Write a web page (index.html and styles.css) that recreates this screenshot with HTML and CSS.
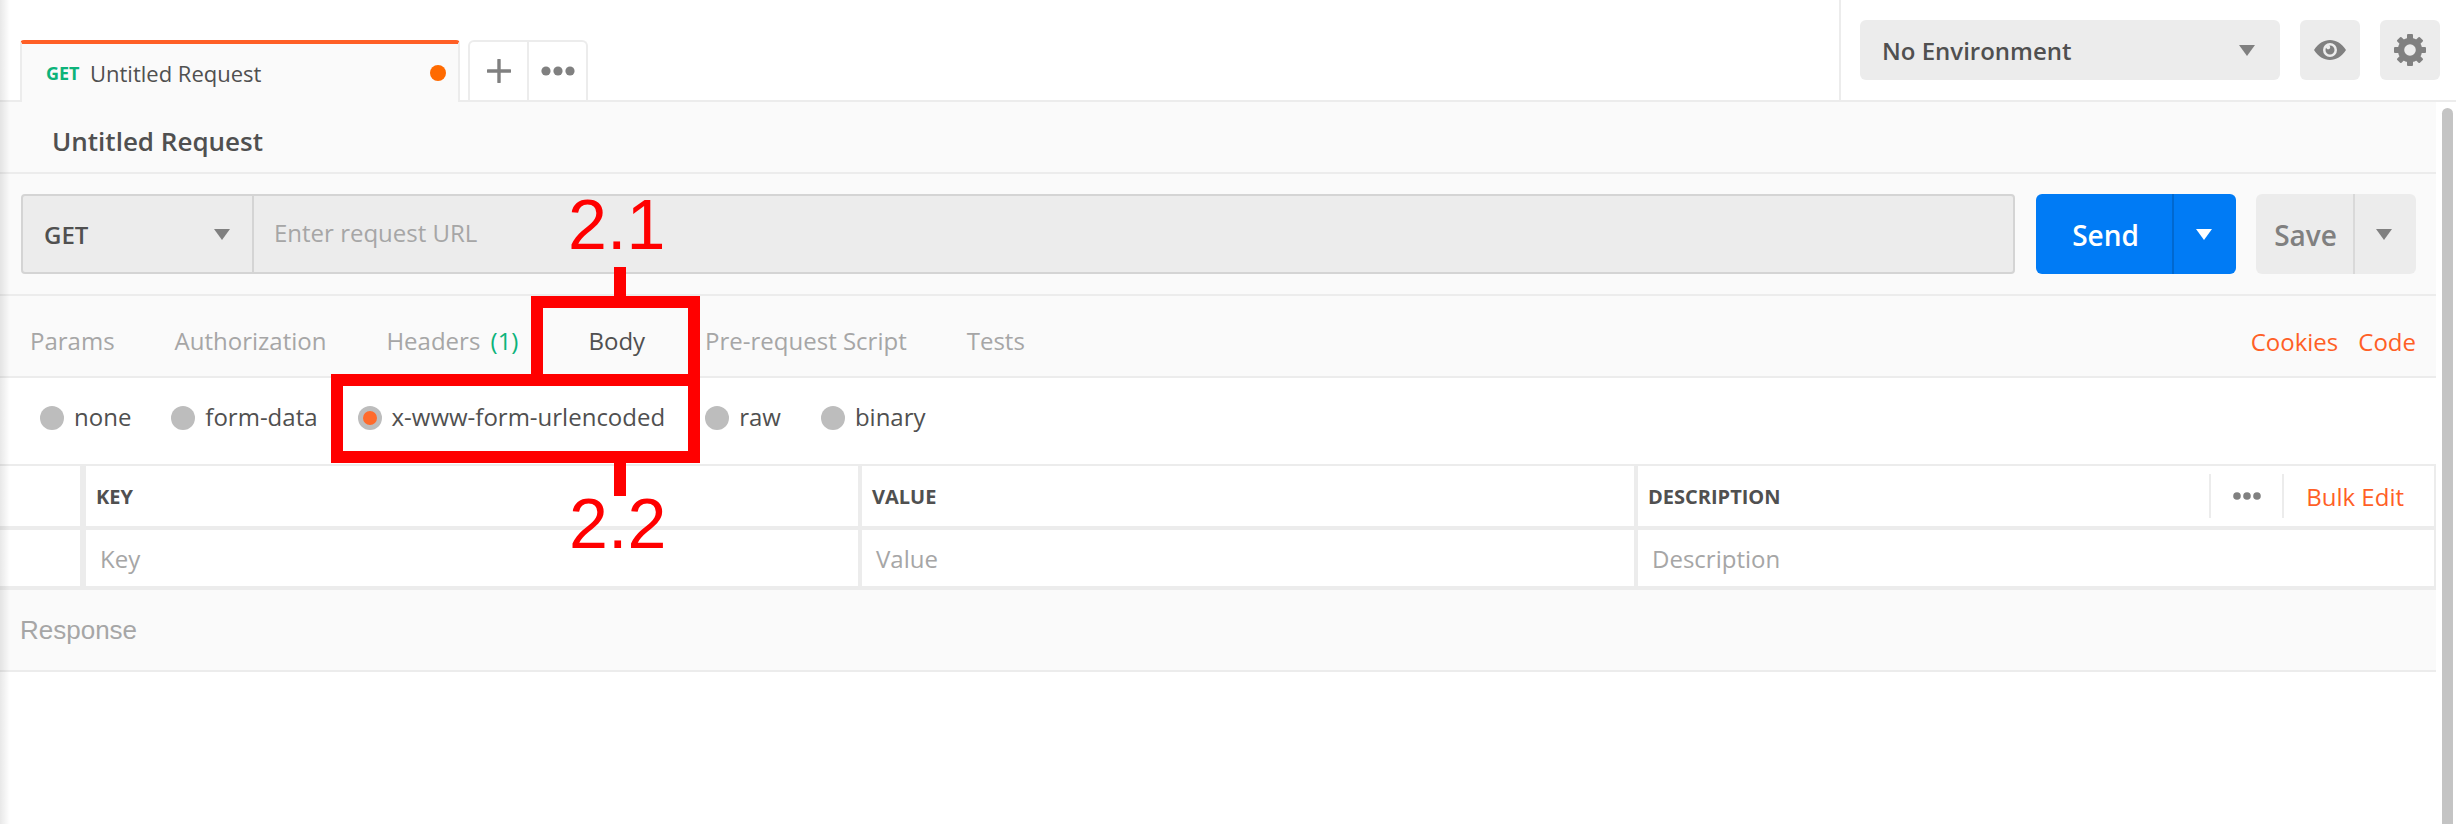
FILE: index.html
```html
<!DOCTYPE html>
<html lang="en">
<head>
    <meta charset="UTF-8">
    <title>Untitled Request</title>
    <link rel="stylesheet" href="styles.css">
</head>
<body>
<div class="app">
    <div class="edge-shade"></div>

    <header class="topbar">
        <div class="tabstrip">
            <div class="req-tab">
                <span class="req-tab-method">GET</span>
                <span class="req-tab-name">Untitled Request</span>
                <span class="req-tab-dot"></span>
            </div>
            <div class="tab-actions">
                <div class="tab-action">
                    <svg width="24" height="24" viewBox="0 0 24 24"><path d="M12 1v22M1 12h22" stroke="#808080" stroke-width="3.4" stroke-linecap="round" fill="none"/></svg>
                </div>
                <div class="tab-action">
                    <svg width="34" height="10" viewBox="0 0 34 10"><circle cx="5" cy="5" r="4.6" fill="#808080"/><circle cx="17" cy="5" r="4.6" fill="#808080"/><circle cx="29" cy="5" r="4.6" fill="#808080"/></svg>
                </div>
            </div>
        </div>
        <div class="env">
            <div class="env-select">
                <span>No Environment</span>
                <i class="caret"></i>
            </div>
            <div class="env-btn">
                <svg width="32" height="20" viewBox="0 0 32 20"><path fill="#808080" fill-rule="evenodd" d="M0 10C4 3.500 10 0 16 0s12 3.500 16 10c-4 6.500-10 10-16 10S4 16.500 0 10zm16-7a7 7 0 1 0 0 14 7 7 0 0 0 0-14z"/><path fill="#808080" fill-rule="evenodd" d="M16 5.500a4.500 4.500 0 1 1-4.500 4.500c0-.8.2-1.500.6-2.200.3.900 1.100 1.500 2 1.500 1.200 0 2.100-.9 2.100-2.100 0-.8-.4-1.300-.9-1.700z"/></svg>
            </div>
            <div class="env-btn">
                <svg width="32" height="32" viewBox="-16 -16 32 32">
                    <circle r="9" fill="none" stroke="#808080" stroke-width="6.400"/>
                    <g fill="#808080">
                        <rect x="-3" y="-16" width="6" height="6" rx="1"/>
                        <rect x="-3" y="-16" width="6" height="6" rx="1" transform="rotate(45)"/>
                        <rect x="-3" y="-16" width="6" height="6" rx="1" transform="rotate(90)"/>
                        <rect x="-3" y="-16" width="6" height="6" rx="1" transform="rotate(135)"/>
                        <rect x="-3" y="-16" width="6" height="6" rx="1" transform="rotate(180)"/>
                        <rect x="-3" y="-16" width="6" height="6" rx="1" transform="rotate(225)"/>
                        <rect x="-3" y="-16" width="6" height="6" rx="1" transform="rotate(270)"/>
                        <rect x="-3" y="-16" width="6" height="6" rx="1" transform="rotate(315)"/>
                    </g>
                </svg>
            </div>
        </div>
    </header>

    <div class="workspace">
        <main class="panel">
            <div class="title-row">Untitled Request</div>

            <div class="url-row">
                <div class="url-bar">
                    <div class="method">
                        <span>GET</span>
                        <i class="caret"></i>
                    </div>
                    <div class="url-input">Enter request URL</div>
                </div>
                <div class="split-btn send-btn">
                    <span class="split-main">Send</span>
                    <span class="split-arrow"><i class="caret caret-white"></i></span>
                </div>
                <div class="split-btn save-btn">
                    <span class="split-main">Save</span>
                    <span class="split-arrow"><i class="caret"></i></span>
                </div>
            </div>

            <nav class="section-tabs">
                <span class="section-tab">Params</span>
                <span class="section-tab">Authorization</span>
                <span class="section-tab">Headers <em class="count">(1)</em></span>
                <span class="section-tab section-tab-active">Body</span>
                <span class="section-tab">Pre-request Script</span>
                <span class="section-tab">Tests</span>
                <span class="section-links">
                    <a class="link">Cookies</a>
                    <a class="link">Code</a>
                </span>
            </nav>

            <div class="radio-row">
                <label class="radio"><i class="radio-dot"></i>none</label>
                <label class="radio"><i class="radio-dot"></i>form-data</label>
                <label class="radio"><i class="radio-dot radio-dot-on"></i>x-www-form-urlencoded</label>
                <label class="radio"><i class="radio-dot"></i>raw</label>
                <label class="radio"><i class="radio-dot"></i>binary</label>
            </div>

            <div class="kv-table">
                <div class="kv-cell kv-check kv-head"></div>
                <div class="kv-cell kv-key kv-head">KEY</div>
                <div class="kv-cell kv-value kv-head">VALUE</div>
                <div class="kv-cell kv-desc kv-head">
                    <span class="kv-desc-label">DESCRIPTION</span>
                    <span class="kv-more">
                        <svg width="28" height="8" viewBox="0 0 28 8"><circle cx="4" cy="4" r="3.800" fill="#808080"/><circle cx="14" cy="4" r="3.800" fill="#808080"/><circle cx="24" cy="4" r="3.800" fill="#808080"/></svg>
                    </span>
                    <a class="link bulk">Bulk Edit</a>
                </div>
                <div class="kv-cell kv-check"></div>
                <div class="kv-cell kv-key kv-holder">Key</div>
                <div class="kv-cell kv-value kv-holder">Value</div>
                <div class="kv-cell kv-desc kv-holder">Description</div>
            </div>

            <div class="response-row">Response</div>
        </main>
        <div class="scrollbar"><div class="scroll-thumb"></div></div>
    </div>

    <!-- red annotations drawn over the screenshot -->
    <div class="mark mark-body"></div>
    <div class="mark mark-radio"></div>
    <div class="mark-line mark-line-top"></div>
    <div class="mark-line mark-line-bottom"></div>
    <div class="mark-num mark-num-top">2.1</div>
    <div class="mark-num mark-num-bottom">2.2</div>
</div>
</body>
</html>
```

FILE: styles.css
```css
*{
    margin: 0;
    padding: 0;
    box-sizing: border-box;
}
html,body{
    width: 100%;
    height: 100%;
    background: #fff;
    overflow: hidden;
}
body{
    font-family: "Open Sans", "Noto Sans", sans-serif;
    font-size: 24px;
    color: #505050;
}
i,em{
    font-style: normal;
}
.app{
    position: relative;
    width: 2456px;
    height: 824px;
    display: flex;
    flex-direction: column;
}
.edge-shade{
    position: absolute;
    left: 0;
    top: 0;
    width: 10px;
    height: 100%;
    background: linear-gradient(to right, rgba(0,0,0,0.09), rgba(0,0,0,0));
    pointer-events: none;
}
.caret{
    display: block;
    width: 0;
    height: 0;
    border-left: 8px solid transparent;
    border-right: 8px solid transparent;
    border-top: 11px solid #808080;
}
.caret-white{
    border-top-color: #fff;
}
.link{
    color: #ff5f26;
}

/* top bar */
.topbar{
    height: 102px;
    flex: none;
    display: flex;
    border-bottom: 2px solid #ececec;
}
.tabstrip{
    width: 1839px;
    padding: 40px 0 0 20px;
    display: flex;
    gap: 8px;
}
.req-tab{
    width: 440px;
    height: 62px;
    display: flex;
    align-items: center;
    padding: 0 12px 0 24px;
    background: #fafafa;
    border: 2px solid #ececec;
    border-top: 4px solid #ff5f26;
    border-bottom: none;
    border-radius: 4px 4px 0 0;
    position: relative;
    z-index: 1;
}
.req-tab-method{
    font-size: 18px;
    font-weight: 700;
    color: #0cb37a;
    width: 44px;
}
.req-tab-name{
    font-size: 22px;
    flex: 1;
}
.req-tab-dot{
    width: 16px;
    height: 16px;
    border-radius: 50%;
    background: #ff6a00;
}
.tab-actions{
    width: 120px;
    height: 60px;
    display: flex;
    border: 2px solid #ececec;
    border-bottom: none;
    border-radius: 6px 6px 0 0;
}
.tab-action{
    flex: 1;
    display: flex;
    align-items: center;
    justify-content: center;
}
.tab-action + .tab-action{
    border-left: 2px solid #ececec;
}
.env{
    flex: 1;
    display: flex;
    gap: 20px;
    padding: 20px 0 0 19px;
    border-left: 2px solid #ececec;
}
.env-select{
    width: 420px;
    height: 60px;
    background: #ececec;
    border-radius: 6px;
    display: flex;
    align-items: center;
    justify-content: space-between;
    padding: 0 25px 0 22px;
    font-size: 24px;
    font-weight: 600;
}
.env-btn{
    width: 60px;
    height: 60px;
    background: #ececec;
    border-radius: 6px;
    display: flex;
    align-items: center;
    justify-content: center;
}

/* request panel */
.workspace{
    flex: 1;
    display: flex;
    min-height: 0;
}
.panel{
    width: 2436px;
}
.scrollbar{
    flex: 1;
    padding: 6px 3px 0 6px;
}
.scroll-thumb{
    height: 100%;
    background: #c4c4c4;
    border-radius: 6px 6px 0 0;
}
.title-row{
    height: 72px;
    padding: 8px 0 0 52px;
    display: flex;
    align-items: center;
    font-size: 26px;
    font-weight: 600;
    background: #fafafa;
    border-bottom: 2px solid #ececec;
}
.url-row{
    height: 122px;
    display: flex;
    padding: 20px 0 0 21px;
    background: #fafafa;
    border-bottom: 2px solid #ececec;
}
.url-bar{
    width: 1994px;
    height: 80px;
    display: flex;
    background: #ececec;
    border: 2px solid #d4d4d4;
    border-radius: 4px;
    margin-right: 21px;
}
.method{
    width: 231px;
    display: flex;
    align-items: center;
    justify-content: space-between;
    padding: 0 22px 0 21px;
    font-weight: 600;
    border-right: 2px solid #d4d4d4;
}
.url-input{
    flex: 1;
    display: flex;
    align-items: center;
    padding: 0 0 4px 20px;
    color: #a6a6a6;
}
.split-btn{
    height: 80px;
    display: flex;
    border-radius: 6px;
    font-size: 28px;
    font-weight: 600;
}
.split-main{
    display: flex;
    align-items: center;
    justify-content: center;
    padding-top: 2px;
}
.split-arrow{
    flex: 1;
    display: flex;
    align-items: center;
    justify-content: center;
    padding-right: 3px;
}
.send-btn{
    width: 200px;
    margin-right: 20px;
    background: #007bf5;
    color: #fff;
}
.send-btn .split-main{
    width: 136px;
    padding-left: 3px;
}
.send-btn .split-arrow{
    border-left: 2px solid #0068d0;
}
.save-btn{
    width: 160px;
    background: #ececec;
    color: #808080;
}
.save-btn .split-main{
    width: 97px;
    padding-left: 2px;
}
.save-btn .split-arrow{
    border-left: 2px solid #d9d9d9;
}
.section-tabs{
    height: 82px;
    display: flex;
    align-items: center;
    gap: 60px;
    padding: 8px 20px 0 30px;
    background: #fafafa;
    border-bottom: 2px solid #ececec;
    color: #a6a6a6;
}
.section-tab-active{
    color: #505050;
    margin-left: 10px;
}
.count{
    color: #0cb37a;
    margin-left: 4px;
}
.section-links{
    margin-left: auto;
    display: flex;
    gap: 20px;
    padding-top: 2px;
}
.radio-row{
    height: 86px;
    display: flex;
    align-items: center;
    gap: 40px;
    padding: 0 0 10px 40px;
}
.radio{
    display: flex;
    align-items: center;
    gap: 10px;
}
.radio-dot{
    width: 24px;
    height: 24px;
    margin-top: 3px;
    border-radius: 50%;
    background: #bdbdbd;
    display: flex;
    align-items: center;
    justify-content: center;
}
.radio-dot-on::after{
    content: "";
    width: 14px;
    height: 14px;
    border-radius: 50%;
    background: #ff6a2b;
}
.kv-table{
    display: grid;
    grid-template-columns: 86px 776px 776px 1fr;
    grid-template-rows: 64px 60px;
    border-top: 2px solid #ececec;
}
.kv-cell{
    display: flex;
    align-items: center;
    border-right: 4px solid #ececec;
    border-bottom: 4px solid #ececec;
}
.kv-check{
    border-right-width: 6px;
}
.kv-desc{
    border-right-width: 2px;
}
.kv-head{
    font-size: 20px;
    font-weight: 700;
    padding-left: 10px;
}
.kv-holder{
    color: #a6a6a6;
    padding-left: 14px;
}
.kv-head.kv-desc{
    padding-right: 30px;
}
.kv-desc-label{
    flex: 1;
}
.kv-more{
    width: 75px;
    height: 44px;
    margin-right: 22px;
    border-left: 2px solid #ececec;
    border-right: 2px solid #ececec;
    display: flex;
    align-items: center;
    justify-content: center;
}
.bulk{
    font-size: 24px;
    font-weight: 400;
}
.response-row{
    height: 82px;
    padding-left: 20px;
    display: flex;
    align-items: center;
    font-family: "Liberation Sans", Arial, sans-serif;
    font-size: 26px;
    color: #a6a6a6;
    background: #fafafa;
    border-bottom: 2px solid #ececec;
}

/* annotations */
.mark{
    position: absolute;
    border: 12px solid #ff0000;
}
.mark-body{
    left: 531px;
    top: 296px;
    width: 169px;
    height: 88px;
    border-bottom: none;
}
.mark-radio{
    left: 331px;
    top: 374px;
    width: 369px;
    height: 89px;
}
.mark-line{
    position: absolute;
    left: 614px;
    width: 12px;
    background: #ff0000;
}
.mark-line-top{
    top: 267px;
    height: 30px;
}
.mark-line-bottom{
    top: 462px;
    height: 34px;
}
.mark-num{
    position: absolute;
    font-family: "Liberation Sans", Arial, sans-serif;
    font-size: 70px;
    line-height: 70px;
    color: #ff0000;
}
.mark-num-top{
    left: 568px;
    top: 190px;
}
.mark-num-bottom{
    left: 569px;
    top: 489px;
}
```
